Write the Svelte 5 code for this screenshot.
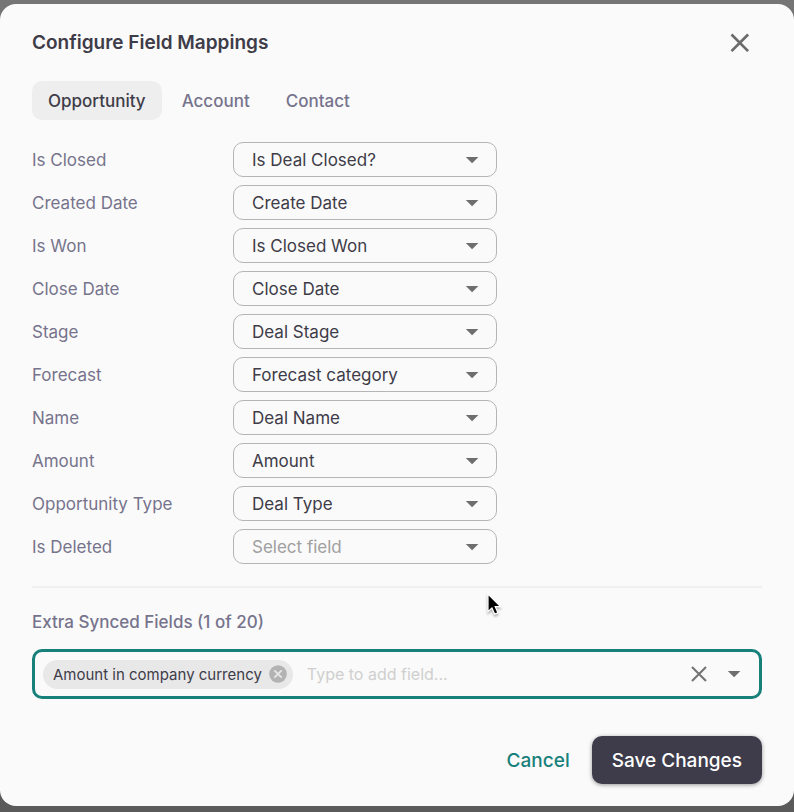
<script>
	const tabs = ['Opportunity', 'Account', 'Contact'];
	let activeTab = $state('Opportunity');

	let mappings = $state([
		{ id: 'is-closed', label: 'Is Closed', value: 'Is Deal Closed?' },
		{ id: 'created-date', label: 'Created Date', value: 'Create Date' },
		{ id: 'is-won', label: 'Is Won', value: 'Is Closed Won' },
		{ id: 'close-date', label: 'Close Date', value: 'Close Date' },
		{ id: 'stage', label: 'Stage', value: 'Deal Stage' },
		{ id: 'forecast', label: 'Forecast', value: 'Forecast category' },
		{ id: 'name', label: 'Name', value: 'Deal Name' },
		{ id: 'amount', label: 'Amount', value: 'Amount' },
		{ id: 'type', label: 'Opportunity Type', value: 'Deal Type' },
		{ id: 'is-deleted', label: 'Is Deleted', value: '' }
	]);

	const options = mappings.map((m) => m.value).filter(Boolean);

	let extras = $state(['Amount in company currency']);
	let query = $state('');

	function removeExtra(field) {
		extras = extras.filter((f) => f !== field);
	}

	function clearExtras() {
		extras = [];
		query = '';
	}
</script>

{#snippet arrow()}
	<svg class="arrow" width="14" height="8" viewBox="0 0 14 8" aria-hidden="true">
		<path d="M0.8 0.9h12.6L7.1 7.2z" fill="#6e6e6e" />
	</svg>
{/snippet}

<div class="backdrop">
	<div class="dialog" role="dialog" aria-modal="true" aria-labelledby="dialog-title">
		<header>
			<h1 id="dialog-title">Configure Field Mappings</h1>
			<button class="icon-button" aria-label="Close">
				<svg width="20" height="20" viewBox="0 0 20 20" aria-hidden="true">
					<path d="M1.5 1.5l16.6 16.6M18.1 1.5L1.5 18.1" stroke="#6b6b6b" stroke-width="2.7" />
				</svg>
			</button>
		</header>

		<div class="tabs" role="tablist">
			{#each tabs as tab}
				<button
					class="tab"
					class:active={tab === activeTab}
					role="tab"
					aria-selected={tab === activeTab}
					onclick={() => (activeTab = tab)}>{tab}</button>
			{/each}
		</div>

		<div class="mappings">
			{#each mappings as mapping (mapping.id)}
				<div class="row">
					<label for={mapping.id}>{mapping.label}</label>
					<div class="select">
						<select id={mapping.id} class:empty={!mapping.value} bind:value={mapping.value}>
							<option value="">Select field</option>
							{#each options as option}
								<option value={option}>{option}</option>
							{/each}
						</select>
						{@render arrow()}
					</div>
				</div>
			{/each}
		</div>

		<section class="extras">
			<label for="extra-fields">Extra Synced Fields ({extras.length} of 20)</label>
			<div class="combo">
				{#each extras as field}
					<span class="chip">
						{field}
						<button aria-label="Remove {field}" onclick={() => removeExtra(field)}>
							<svg width="18" height="18" viewBox="0 0 18 18" aria-hidden="true">
								<circle cx="9" cy="9" r="8.8" fill="#b3b3b3" />
								<path d="M5.3 5.3l7.4 7.4M12.7 5.3l-7.4 7.4" stroke="#e8e8e8" stroke-width="1.7" />
							</svg>
						</button>
					</span>
				{/each}
				<input id="extra-fields" type="text" placeholder="Type to add field..." autocomplete="off" bind:value={query} />
				<button class="icon-button" aria-label="Clear" onclick={clearExtras}>
					<svg width="16" height="16" viewBox="0 0 16 16" aria-hidden="true">
						<path d="M1 1l14 14M15 1L1 15" stroke="#737373" stroke-width="2.1" />
					</svg>
				</button>
				<button class="icon-button" aria-label="Open">
					{@render arrow()}
				</button>
			</div>
			<svg class="pointer" width="18" height="26" viewBox="0 0 18 26" aria-hidden="true">
				<path d="M2 2v17.6l3.9-3.7 2.8 6.2 3.2-1.4-2.7-6.1h5.3z" fill="#000" stroke="#fff" stroke-width="1.2" />
			</svg>
		</section>

		<footer>
			<button class="cancel">Cancel</button>
			<button class="save">Save Changes</button>
		</footer>
	</div>
</div>

<style>
	:global(body) {
		margin: 0;
		background: #5c5c5c;
	}

	.backdrop {
		padding: 4px 0 6px;
		background: linear-gradient(#757575, #5a5a5a);
		font-family: Inter, 'Liberation Sans', sans-serif;
		font-size: 17px;
		color: #3e3c48;
	}

	.dialog {
		box-sizing: border-box;
		padding: 22px 32px;
		border-radius: 16px;
		background: #fafafa;
	}

	button,
	input,
	select {
		margin: 0;
		border: 0;
		padding: 0;
		background: none;
		color: inherit;
		font: inherit;
		outline: none;
	}

	button {
		cursor: pointer;
	}

	svg {
		display: block;
	}

	header {
		display: flex;
		align-items: center;
		justify-content: space-between;
		padding-right: 12px;
		height: 33px;
	}

	h1 {
		margin: 0;
		font-size: 19px;
		font-weight: 600;
	}

	.tabs {
		display: flex;
		gap: 4px;
		margin-top: 22px;
	}

	.tab {
		height: 39px;
		padding: 0 16px;
		border-radius: 10px;
		color: #76738c;
		font-weight: 500;
	}

	.tab.active {
		background: #eee;
		color: #3e3c48;
	}

	.mappings {
		display: flex;
		flex-direction: column;
		gap: 8px;
		padding: 22px 0;
		border-bottom: 2px solid #f0f0f0;
	}

	.row {
		display: grid;
		grid-template-columns: 201px minmax(0, 264px);
		align-items: center;
	}

	.row label {
		color: #76738c;
	}

	.select {
		display: grid;
		align-items: center;
	}

	.select select,
	.select .arrow {
		grid-area: 1 / 1;
	}

	.select .arrow {
		justify-self: end;
		margin-right: 18px;
		pointer-events: none;
	}

	select {
		appearance: none;
		width: 100%;
		height: 35px;
		padding: 0 40px 0 18px;
		border: 1px solid #b5b5b5;
		border-radius: 10px;
	}

	select.empty {
		color: #a0a0a0;
	}

	.extras {
		position: relative;
		padding-top: 22px;
	}

	.extras label {
		display: block;
		line-height: 24px;
		color: #76738c;
		font-weight: 500;
	}

	.combo {
		display: flex;
		align-items: center;
		box-sizing: border-box;
		min-height: 50px;
		margin-top: 15px;
		padding: 0 18px 0 8px;
		border: 3px solid #17807a;
		border-radius: 10px;
	}

	.chip {
		display: flex;
		align-items: center;
		gap: 7px;
		height: 29px;
		padding: 0 6px 0 10px;
		border-radius: 15px;
		background: #e8e8e8;
		font-size: 15px;
		white-space: nowrap;
	}

	.combo input {
		flex: 1;
		min-width: 0;
		margin-left: 14px;
		font-size: 16px;
	}

	.combo input::placeholder {
		color: #cfcfcf;
		opacity: 1;
	}

	.combo .icon-button + .icon-button {
		margin-left: 20px;
	}

	.pointer {
		position: absolute;
		top: 4px;
		left: 454px;
		filter: drop-shadow(0 2px 1px rgba(0, 0, 0, 0.3));
	}

	footer {
		display: flex;
		justify-content: flex-end;
		gap: 22px;
		margin-top: 37px;
		font-size: 19px;
		font-weight: 500;
	}

	.cancel {
		color: #17807a;
	}

	.save {
		height: 48px;
		padding: 0 20px;
		border-radius: 10px;
		background: #3e3c4b;
		color: #fff;
		box-shadow: 0 1px 4px rgba(0, 0, 0, 0.4);
	}
</style>
